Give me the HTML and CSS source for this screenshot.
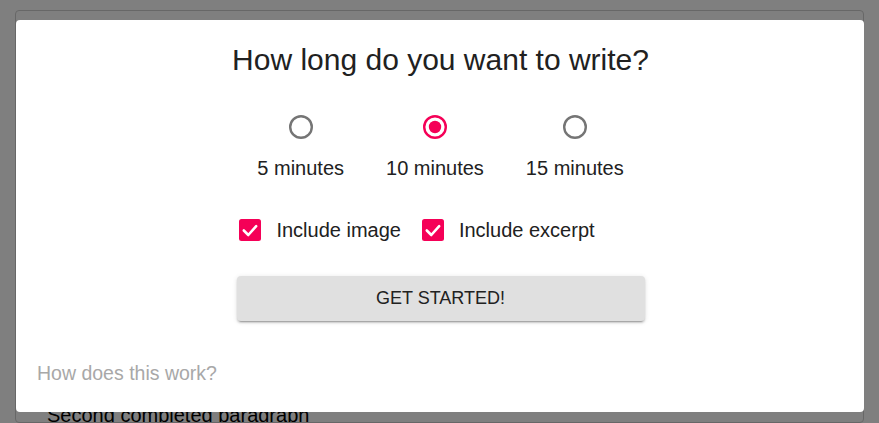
FILE: index.html
```html
<!DOCTYPE html>
<html>
<head>
<meta charset="utf-8">
<link rel="stylesheet" href="styles.css">
</head>
<body>
<main class="page">
  <section class="card">
    <div class="card-body">
      <p class="para">Second completed paragraph</p>
    </div>
  </section>
</main>
<div class="overlay"></div>
<div class="dialog">
  <h1 class="title">How long do you want to write?</h1>
  <div class="radios">
    <label class="radio">
      <svg class="radio-icon" width="26" height="26" viewBox="0 0 26 26"><circle cx="13" cy="13" r="10.8" fill="none" stroke="#757575" stroke-width="2.4"/></svg>
      <span class="opt">5 minutes</span>
    </label>
    <label class="radio">
      <svg class="radio-icon" width="26" height="26" viewBox="0 0 26 26"><circle cx="13" cy="13" r="10.8" fill="none" stroke="#f50057" stroke-width="2.4"/><circle cx="13" cy="13" r="6.2" fill="#f50057"/></svg>
      <span class="opt">10 minutes</span>
    </label>
    <label class="radio">
      <svg class="radio-icon" width="26" height="26" viewBox="0 0 26 26"><circle cx="13" cy="13" r="10.8" fill="none" stroke="#757575" stroke-width="2.4"/></svg>
      <span class="opt">15 minutes</span>
    </label>
  </div>
  <div class="checks">
    <label class="check">
      <svg class="check-icon" width="22" height="22" viewBox="0 0 22 22"><rect x="0" y="0" width="22" height="22" rx="2.5" fill="#f50057"/><polyline points="4.8,11.5 9.3,16 17.2,7.2" fill="none" stroke="#fff" stroke-width="2.6" stroke-linecap="round" stroke-linejoin="round"/></svg>
      <span class="opt">Include image</span>
    </label>
    <label class="check">
      <svg class="check-icon" width="22" height="22" viewBox="0 0 22 22"><rect x="0" y="0" width="22" height="22" rx="2.5" fill="#f50057"/><polyline points="4.8,11.5 9.3,16 17.2,7.2" fill="none" stroke="#fff" stroke-width="2.6" stroke-linecap="round" stroke-linejoin="round"/></svg>
      <span class="opt">Include excerpt</span>
    </label>
  </div>
  <div class="actions">
    <button class="start">GET STARTED!</button>
  </div>
  <p class="help">How does this work?</p>
</div>
</body>
</html>
```

FILE: styles.css
```css
* { box-sizing: border-box; }
html, body { margin: 0; padding: 0; }
html { overflow: hidden; }
body {
  background: #fff;
  font-family: "Liberation Sans", Arial, sans-serif;
  width: 879px;
  height: 423px;
  overflow: hidden;
}
.page { padding: 10px 15px 0 15px; }
.card {
  border: 1px solid #cfcfcf;
  border-radius: 4px;
  height: 413px;
  overflow: hidden;
}
.card-body { padding: 392px 31px 0 31px; }
.para {
  margin: 0;
  font-size: 20px;
  line-height: 24px;
  color: #000;
}
.overlay {
  position: fixed;
  inset: 0;
  background: rgba(0, 0, 0, 0.5);
}
.dialog {
  position: absolute;
  left: 16px;
  top: 20px;
  width: 848px;
  height: 392px;
  background: #fff;
  border-radius: 4px;
  padding-top: 22px;
  display: flex;
  flex-direction: column;
  align-items: center;
}
.title {
  margin: 0;
  font-weight: normal;
  font-size: 30px;
  line-height: 36px;
  color: #212121;
  text-align: center;
  margin-left: 1px;
}
.radios {
  display: flex;
  gap: 42px;
  margin-top: 36px;
  margin-left: 1px;
}
.radio {
  display: flex;
  flex-direction: column;
  align-items: center;
}
.radio-icon { display: block; }
.opt {
  font-size: 20px;
  line-height: 24px;
  color: #212121;
  white-space: nowrap;
}
.radio .opt { margin-top: 16px; }
.checks {
  display: flex;
  gap: 21px;
  margin-top: 38px;
  padding-right: 46px;
}
.check {
  display: flex;
  align-items: center;
  gap: 15px;
  height: 24px;
}
.check-icon { display: block; }
.actions { margin-top: 34px; }
.start {
  width: 408px;
  height: 45px;
  border: none;
  border-radius: 4px;
  background: #e0e0e0;
  box-shadow: 0 3px 1px -2px rgba(0,0,0,0.2), 0 2px 2px 0 rgba(0,0,0,0.14), 0 1px 5px 0 rgba(0,0,0,0.12);
  font-family: "Liberation Sans", Arial, sans-serif;
  font-size: 18px;
  color: #212121;
  margin-left: 1px;
  padding: 0;
}
.help {
  align-self: flex-start;
  margin: 40px 0 0 21px;
  font-size: 19.5px;
  line-height: 24px;
  color: #a8a8a8;
}
```
